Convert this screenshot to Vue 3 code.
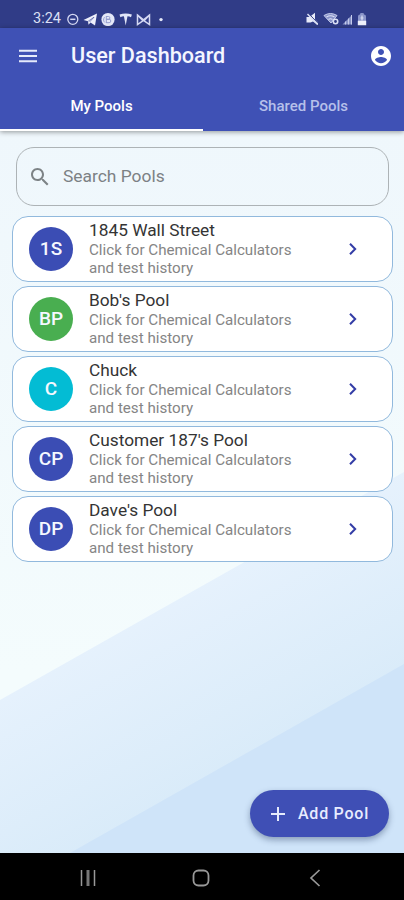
<script setup>
const pools = [
  { initials: '1S', name: '1845 Wall Street', color: '#3b4db4' },
  { initials: 'BP', name: "Bob's Pool", color: '#49ae50' },
  { initials: 'C', name: 'Chuck', color: '#03bcd4' },
  { initials: 'CP', name: "Customer 187's Pool", color: '#3b4db4' },
  { initials: 'DP', name: "Dave's Pool", color: '#3b4db4' },
]
</script>

<template>
  <div class="phone">
    <div class="status">
      <span class="time">3:24</span>
      <svg class="status-left" width="108" height="14" viewBox="0 0 108 14" fill="none" stroke="#d5d9f3">
        <circle cx="5.8" cy="7.3" r="5" stroke-width="1.3" />
        <path d="M3.2 7.3h5.2" stroke-width="1.5" />
        <path d="M16.500 8 L30 1.500 L28 13.500 L23.500 10.500 L21.500 12.700 L21 9.200z" fill="#eef0fb" stroke="none" />
        <path d="M21.2 9.2 L27 5.2 L22.5 10" stroke="#3b4794" stroke-width=".6" />
        <circle cx="41" cy="7.5" r="6.6" fill="#e4e8f8" stroke="none" />
        <path d="M39.3 4v7M39.3 4.5h2.2a1.4 1.4 0 0 1 0 2.8h-2M39.3 7.3h2.8a1.7 1.7 0 0 1 0 3.4h-2.8M37.5 5.2c-1.5 2-1 4 .2 5.2" stroke="#8b95cb" stroke-width=".9" />
        <path d="M52.500 2.500q6.200-2.200 12.400 0l-.9 2.700q-1.600-1-3.500-1L58.700 13.500 56.900 4.200q-1.900 0-3.500 1z" fill="#e1e5f7" stroke="none" />
        <path d="M70.500 12.500V3l6 4.800L82.500 3v9.500l-6-4.200z M70.500 3l5 5.200M82.500 3l-5 5.200" stroke-width="1.500" />
        <circle cx="94" cy="7.600" r="1.700" fill="#e4e8f8" stroke="none" />
      </svg>
      <svg class="status-right" width="62" height="14" viewBox="0 0 62 14" fill="none" stroke="#dce1f5">
        <path d="M.5 5h3L9 .8v6.700L12 10.500v2.500L7 9.500 4.500 10.500H.5z" fill="#e8ebf9" stroke="none" />
        <path d="M2.200 1l10 10.500" stroke="#303c85" stroke-width="1" />
        <path d="M1.500 2l10 10.500" stroke-width="1.400" />
        <path d="M18 3.500Q24.500-.5 31 3.500L25 11z" fill="#8792c8" stroke="#c8cfed" stroke-width="1" />
        <path d="M20.500 5q4-2.500 8 0M22.500 7.500q2-1.500 4 0" stroke-width="1.100" />
        <circle cx="29.500" cy="9.500" r="2.200" fill="#303c85" stroke-width="1.600" />
        <path d="M36.500 12.500L46 3v9.500z" fill="#8994c8" stroke="none" />
        <path d="M39.500 12.500v-3M42.500 12.500v-6M45.500 12.500V3" stroke="#c5cbea" stroke-width="1" />
        <path d="M52 4.500q0-2 2-2l.5-1.500h3l.5 1.500q2 0 2 2v8.500h-8z" fill="#8a95c9" stroke="none" />
        <path d="M51.800 8.800h8.400v4.400h-8.400z" fill="#edf0fb" stroke="none" />
        <path d="M56 3.500v5M54.500 6h3" stroke-width="1.200" />
      </svg>
    </div>

    <header class="appbar">
      <div class="toolbar">
        <svg class="menu" width="20" height="14" viewBox="0 0 20 14">
          <path d="M1 1.800h18M1 7h18M1 12.200h18" stroke="#e5eafb" stroke-width="2" />
        </svg>
        <h1>User Dashboard</h1>
        <svg class="account" width="24" height="24" viewBox="0 0 24 24" fill="#fff">
          <path d="M12 2C6.480 2 2 6.480 2 12s4.480 10 10 10 10-4.480 10-10S17.520 2 12 2zm0 3c1.660 0 3 1.340 3 3s-1.340 3-3 3-3-1.340-3-3 1.340-3 3-3zm0 14.200c-2.500 0-4.710-1.280-6-3.220.03-1.990 4-3.080 6-3.080 1.990 0 5.970 1.090 6 3.080-1.290 1.940-3.500 3.220-6 3.220z" />
        </svg>
      </div>
      <nav class="tabs">
        <div class="tab active">My Pools</div>
        <div class="tab">Shared Pools</div>
      </nav>
    </header>

    <main class="content">
      <svg class="backdrop" viewBox="0 0 404 722" preserveAspectRatio="none">
        <defs>
          <linearGradient id="base" x1="0" y1="0" x2="0" y2="1">
            <stop offset="0" stop-color="#eff7fc" />
            <stop offset=".75" stop-color="#f4fcfd" />
          </linearGradient>
          <linearGradient id="band" gradientUnits="userSpaceOnUse" x1="150" y1="460" x2="245" y2="634">
            <stop offset="0" stop-color="#e7f2fd" />
            <stop offset="1" stop-color="#d9ebf9" />
          </linearGradient>
        </defs>
        <rect width="404" height="722" fill="url(#base)" />
        <path d="M0 569L404 341V722H0z" fill="url(#band)" />
        <path d="M70 722L404 533V722z" fill="#cfe4f9" />
      </svg>

      <div class="search">
        <svg width="24" height="24" viewBox="0 0 24 24" fill="#7d8386">
          <path d="M15.500 14h-.79l-.28-.27C15.410 12.590 16 11.110 16 9.500 16 5.910 13.090 3 9.500 3S3 5.910 3 9.500 5.910 16 9.500 16c1.610 0 3.090-.59 4.230-1.570l.27.28v.79l5 4.990L20.490 19l-4.990-5zm-6 0C7.010 14 5 11.990 5 9.500S7.010 5 9.500 5 14 7.010 14 9.500 11.990 14 9.500 14z" />
        </svg>
        <span>Search Pools</span>
      </div>

      <div class="list">
        <article v-for="pool in pools" :key="pool.name" class="card">
          <div class="avatar" :style="{ backgroundColor: pool.color }">{{ pool.initials }}</div>
          <div class="info">
            <h2>{{ pool.name }}</h2>
            <p>Click for Chemical Calculators<br />and test history</p>
          </div>
          <svg class="chevron" width="10" height="14" viewBox="0 0 10 14" fill="none">
            <path d="M2 1.700L7.200 7 2 12.300" stroke="#333da6" stroke-width="2" />
          </svg>
        </article>
      </div>

      <button class="fab">
        <svg width="14" height="14" viewBox="0 0 14 14">
          <path d="M7 0v14M0 7h14" stroke="#e6ebfc" stroke-width="2" />
        </svg>
        <span>Add Pool</span>
      </button>
    </main>

    <footer class="navbar">
      <svg width="16" height="16" viewBox="0 0 16 16" stroke="#999" stroke-width="1.500">
        <path d="M1.500 0v16M14.500 0v16" />
        <path d="M8 0v16" stroke="#777" stroke-width="3" />
      </svg>
      <svg class="home" width="18" height="18" viewBox="0 0 18 18" fill="none" stroke="#999" stroke-width="1.800">
        <rect x="1.500" y="1.500" width="15" height="15" rx="5" />
      </svg>
      <svg width="12" height="18" viewBox="0 0 12 18" fill="none" stroke="#999" stroke-width="1.700">
        <path d="M10.500 1L2 9l8.500 8" />
      </svg>
    </footer>
  </div>
</template>

<style>
body {
  margin: 0;
}
</style>

<style scoped>
.phone {
  width: 404px;
  height: 900px;
  display: flex;
  flex-direction: column;
  overflow: hidden;
  font-family: Roboto, "Liberation Sans", sans-serif;
}
.status {
  height: 28px;
  flex: none;
  box-sizing: border-box;
  display: flex;
  align-items: center;
  padding: 9px 36px 0 33px;
  background: #303c87;
  color: #dce0f5;
}
.time {
  width: 34px;
  font-size: 14.500px;
  line-height: 18px;
}
.status-right {
  margin-left: auto;
}
.appbar {
  height: 103px;
  flex: none;
  display: flex;
  flex-direction: column;
  background: #3f51b5;
  box-shadow: 0 1px 5px rgba(0, 0, 0, 0.4);
  position: relative;
  z-index: 1;
}
.toolbar {
  height: 56px;
  display: flex;
  align-items: center;
  padding: 0 11px 0 18px;
}
h1 {
  margin: 0 auto 0 33px;
  font-size: 21.600px;
  font-weight: 500;
  line-height: 28px;
  color: #f4f6ff;
}
.menu,
.account {
  flex: none;
}
.tabs {
  flex: 1;
  display: grid;
  grid-template-columns: 203px 1fr;
}
.tab {
  box-sizing: border-box;
  padding-top: 11px;
  border-bottom: 2px solid transparent;
  text-align: center;
  font-size: 15px;
  font-weight: 500;
  line-height: 22px;
  color: #b6c0ea;
}
.tab.active {
  color: #fff;
  border-color: #fff;
}
.content {
  height: 722px;
  flex: none;
  box-sizing: border-box;
  display: flex;
  flex-direction: column;
  position: relative;
  padding: 16px 0 16px;
}
.backdrop {
  position: absolute;
  inset: 0;
  width: 100%;
  height: 100%;
  z-index: -1;
}
.search {
  height: 59px;
  flex: none;
  box-sizing: border-box;
  display: flex;
  align-items: center;
  gap: 11px;
  margin: 0 15px 0 16px;
  padding-left: 11px;
  border: 1px solid #adb3b6;
  border-radius: 18px;
  color: #7c8184;
  font-size: 17.400px;
}
.search span {
  padding-bottom: 2px;
}
.list {
  display: flex;
  flex-direction: column;
  gap: 4px;
  padding: 10px 11px 0 12px;
}
.card {
  height: 66px;
  box-sizing: border-box;
  display: flex;
  align-items: center;
  padding: 0 34px 0 16px;
  background: #fff;
  border: 1px solid #91b9dd;
  border-radius: 16px;
}
.avatar {
  width: 44px;
  height: 44px;
  flex: none;
  border-radius: 50%;
  color: #f5f8ff;
  font-size: 19px;
  font-weight: 500;
  line-height: 44px;
  text-align: center;
}
.info {
  flex: 1;
  padding: 0 0 1px 16px;
}
h2 {
  margin: 0;
  font-size: 17.300px;
  font-weight: 400;
  line-height: 21px;
  color: #343434;
}
p {
  margin: 0;
  font-size: 15.150px;
  line-height: 18px;
  color: #858585;
}
.fab {
  width: 139px;
  height: 47px;
  box-sizing: border-box;
  display: flex;
  align-items: center;
  gap: 13px;
  margin: auto 15px 0 auto;
  padding: 0 0 0 21px;
  border: 0;
  border-radius: 24px;
  background: #3f4fb5;
  color: #e8ecff;
  font: 500 16px/20px Roboto, "Liberation Sans", sans-serif;
  letter-spacing: 0.75px;
  box-shadow: 0 3px 6px rgba(30, 50, 90, 0.4);
}
.navbar {
  flex: 1;
  display: flex;
  align-items: center;
  justify-content: space-between;
  padding: 2px 83px 0 80px;
  background: #000;
}
.home {
  margin-right: 3px;
}
</style>
